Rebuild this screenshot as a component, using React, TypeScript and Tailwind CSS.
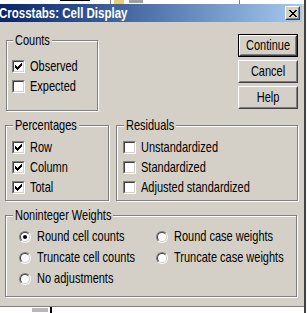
import React from 'react'

const FONT = { fontFamily: '"Liberation Sans", Arial, sans-serif' }

// classic 7x7 check glyph, one rect per pixel run
const CHECK_ROWS: [number, number, number][] = [
  [6, 0, 1],
  [5, 1, 2],
  [0, 2, 1],
  [4, 2, 3],
  [0, 3, 2],
  [3, 3, 3],
  [0, 4, 5],
  [1, 5, 3],
  [2, 6, 1],
]

// the old dialog font is taller than Arial at the same width
function Txt({ children, className = '' }: { children: React.ReactNode; className?: string }) {
  return <span className={`inline-block whitespace-nowrap scale-y-[1.25] ${className}`}>{children}</span>
}

function CheckBox({ checked }: { checked?: boolean }) {
  return (
    <div className="w-[13px] h-[13px] shrink-0 flex border border-t-[#808080] border-l-[#808080] border-b-white border-r-white">
      <div className="flex-1 flex items-center justify-center bg-white border border-t-[#404040] border-l-[#404040] border-b-[#d4d0c8] border-r-[#d4d0c8]">
        {checked && (
          <svg width="7" height="7" viewBox="0 0 7 7" shapeRendering="crispEdges">
            {CHECK_ROWS.map(([x, y, w], i) => (
              <rect key={i} x={x} y={y} width={w} height={1} fill="#000" />
            ))}
          </svg>
        )}
      </div>
    </div>
  )
}

function Radio({ selected }: { selected?: boolean }) {
  return (
    <div className="w-[12px] h-[12px] shrink-0 flex rounded-full border border-t-[#808080] border-l-[#808080] border-b-white border-r-white">
      <div className="flex-1 flex items-center justify-center rounded-full bg-white border border-t-[#404040] border-l-[#404040] border-b-[#d4d0c8] border-r-[#d4d0c8]">
        {selected && <div className="w-[4px] h-[4px] rounded-full bg-black" />}
      </div>
    </div>
  )
}

function CheckRow({ label, checked }: { label: string; checked?: boolean }) {
  return (
    <div className="flex items-center h-[20px] gap-[5px]">
      <CheckBox checked={checked} />
      <Txt>{label}</Txt>
    </div>
  )
}

function RadioRow({ label, selected }: { label: string; selected?: boolean }) {
  return (
    <div className="flex items-center h-[21px] gap-[6px]">
      <Radio selected={selected} />
      <Txt>{label}</Txt>
    </div>
  )
}

function Group({ title, className, legendClass, children }: { title: string; className: string; legendClass: string; children: React.ReactNode }) {
  return (
    <fieldset className={`border border-[#808080] shadow-[inset_1px_1px_0_#fff,1px_1px_0_#fff] ${className}`}>
      <legend className={`px-[2px] bg-[#d4d0c8] leading-[13px] ${legendClass}`}>
        <Txt>{title}</Txt>
      </legend>
      {children}
    </fieldset>
  )
}

function Button({ label, isDefault }: { label: string; isDefault?: boolean }) {
  return (
    <div className={`w-[60px] h-[23px] flex ${isDefault ? 'border border-black' : ''}`}>
      <div className="flex-1 flex border border-t-white border-l-white border-b-[#404040] border-r-[#404040]">
        <div className="flex-1 flex items-center justify-center border border-t-[#d4d0c8] border-l-[#d4d0c8] border-b-[#808080] border-r-[#808080]">
          <Txt>{label}</Txt>
        </div>
      </div>
    </div>
  )
}

export default function App() {
  return (
    <div className="w-[308px] h-[313px] overflow-hidden bg-white flex text-[11px] leading-[13px] text-black" style={FONT}>
      <div className="w-[306px] flex flex-col border-r-2 border-r-[#404040]">
        {/* bits of the window behind */}
        <div className="h-[4px] flex items-start bg-white">
          <div className="ml-[60px] w-[30px] h-[1px] bg-black" />
          <div className="ml-[20px] w-[1px] h-[4px] bg-[#808080]" />
          <div className="ml-[3px] w-[10px] h-[4px] bg-[#e8d070]" />
          <div className="ml-[5px] w-[14px] h-[3px] bg-[#a0a0a0]" />
          <div className="ml-[96px] w-[1px] h-[4px] bg-[#808080]" />
        </div>

        <div className="bg-[#d4d0c8] flex flex-col pr-[2px] flex-1">
          {/* Title bar */}
          <div className="h-[18px] flex items-center bg-gradient-to-r from-[#0a246a] to-[#a6caf0]">
            <Txt className="ml-[-1px] text-white font-bold text-[11.5px] scale-y-[1.2]">Crosstabs: Cell Display</Txt>
            <div className="ml-auto mr-[2px] w-[15px] h-[14px] flex bg-[#d4d0c8] border border-t-white border-l-white border-b-[#404040] border-r-[#404040]">
              <div className="flex-1 flex items-center justify-center border border-t-[#d4d0c8] border-l-[#d4d0c8] border-b-[#808080] border-r-[#808080]">
                <svg width="8" height="7" viewBox="0 0 8 7" shapeRendering="crispEdges">
                  <path d="M0 0h2v1h1v1h2v-1h1v-1h2v1h-1v1h-1v1h-1v1h1v1h1v1h1v1h-2v-1h-1v-1h-2v1h-1v1h-2v-1h1v-1h1v-1h1v-1h-1v-1h-1z" fill="#000" />
                </svg>
              </div>
            </div>
          </div>

          {/* Body */}
          <div className="flex flex-col pl-[5px] pt-[12px] pb-[9px] flex-1">
            <div className="flex items-start">
              <Group title="Counts" className="ml-[1px] w-[92px] h-[77px]" legendClass="ml-[6px]">
                <div className="flex flex-col pl-[5px] pt-[9px]">
                  <CheckRow label="Observed" checked />
                  <CheckRow label="Expected" />
                </div>
              </Group>
              <div className="ml-auto mr-[4px] flex flex-col gap-[3px]">
                <Button label="Continue" isDefault />
                <Button label="Cancel" />
                <Button label="Help" />
              </div>
            </div>

            <div className="flex gap-[7px] mt-[8px]">
              <Group title="Percentages" className="w-[104px] h-[82px]" legendClass="ml-[7px]">
                <div className="flex flex-col pl-[6px] pt-[5px]">
                  <CheckRow label="Row" checked />
                  <CheckRow label="Column" checked />
                  <CheckRow label="Total" checked />
                </div>
              </Group>
              <Group title="Residuals" className="w-[182px] h-[82px]" legendClass="ml-[7px]">
                <div className="flex flex-col pl-[6px] pt-[5px]">
                  <CheckRow label="Unstandardized" />
                  <CheckRow label="Standardized" />
                  <CheckRow label="Adjusted standardized" />
                </div>
              </Group>
            </div>

            <Group title="Noninteger Weights" className="mt-[8px] w-[292px] h-[88px]" legendClass="ml-[7px]">
              <div className="grid grid-cols-[137px_1fr] pl-[13px] pt-[4px]">
                <RadioRow label="Round cell counts" selected />
                <RadioRow label="Round case weights" />
                <RadioRow label="Truncate cell counts" />
                <RadioRow label="Truncate case weights" />
                <RadioRow label="No adjustments" />
              </div>
            </Group>
          </div>
        </div>

        {/* window bottom edge and what lies below */}
        <div className="h-[1px] bg-[#808080]" />
        <div className="h-[1px] bg-[#404040]" />
        <div className="flex-1 flex items-start bg-white">
          <div className="ml-[32px] mt-[1px] w-[16px] h-[4px] bg-[#b8b8b8]" />
          <div className="ml-[2px] w-[2px] h-[6px] bg-black" />
        </div>
      </div>
    </div>
  )
}
